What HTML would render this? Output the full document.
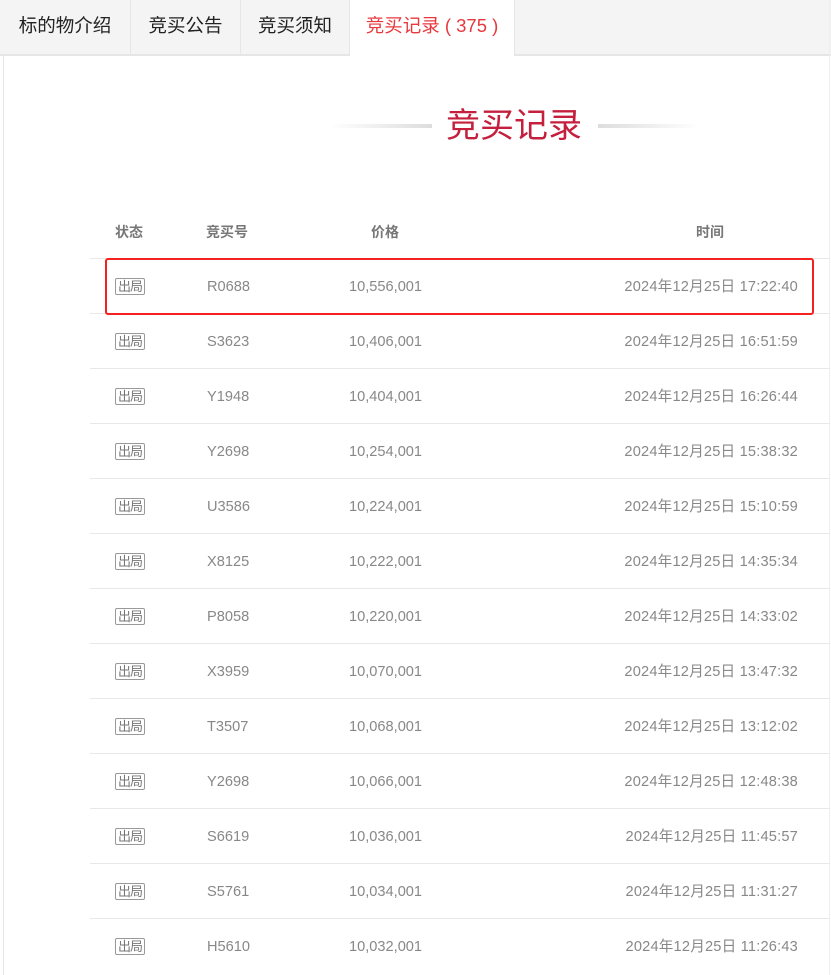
<!DOCTYPE html>
<html><head><meta charset="utf-8"><style>
*{margin:0;padding:0;box-sizing:border-box}
body{width:831px;height:975px;overflow:hidden;background:#fff;font-family:"Liberation Sans","Noto Sans CJK SC",sans-serif;position:relative}
.tabs{position:absolute;left:0;top:0;width:831px;height:56px;background:#f4f4f4;border-bottom:2px solid #e6e6e6}
.tab{position:absolute;top:0;height:54px;line-height:52px;font-size:18.5px;color:#222;text-align:center;border-right:1px solid #e6e6e6}
.tab.on{background:#fff;color:#e8383d;height:56px}
.lb{position:absolute;left:3px;top:56px;width:1px;height:919px;background:#e6e6e6}
.rb{position:absolute;left:829px;top:0;width:1px;height:975px;background:#eee}
.title{position:absolute;left:446px;top:104px;font-size:34px;line-height:44px;color:#c41f3c}
.ln{position:absolute;top:124px;height:4px;width:102px}
.row{position:absolute;left:90px;width:740px;height:55px;border-top:1px solid #e8e8e8;font-size:14.6px;color:#888}
.row span{position:absolute;top:1px;line-height:54px}
.row span.d{letter-spacing:0.2px}
.st{left:25px;top:19px!important;line-height:15px!important;font-size:13px;border:1px solid #999;border-radius:2px;padding:0 1px;color:#777;height:17px;width:30px;text-align:center;letter-spacing:-1px}
.hd{position:absolute;top:222px;font-size:14px;color:#777;font-weight:bold}
.box{position:absolute;left:105px;top:258px;width:709px;height:57px;border:2px solid #f52020;border-radius:3px}
</style></head><body>
<div class="tabs">
<div class="tab" style="left:0;width:131px">标的物介绍</div>
<div class="tab" style="left:131px;width:110px">竞买公告</div>
<div class="tab" style="left:241px;width:109px">竞买须知</div>
<div class="tab on" style="left:350px;width:165px">竞买记录 ( 375 )</div>
</div>
<div class="lb"></div><div class="rb"></div>
<div class="ln" style="left:330px;background:linear-gradient(90deg,#fff,#ddd)"></div>
<div class="title">竞买记录</div>
<div class="ln" style="left:598px;background:linear-gradient(90deg,#ddd,#fff)"></div>
<div class="hd" style="left:115px">状态</div>
<div class="hd" style="left:206px">竞买号</div>
<div class="hd" style="left:371px">价格</div>
<div class="hd" style="left:696px">时间</div>
<div class="row" style="top:258px"><span class="st">出局</span><span style="left:117px">R0688</span><span style="left:259px">10,556,001</span><span class="d" style="right:32px">2024年12月25日 17:22:40</span></div>
<div class="row" style="top:313px"><span class="st">出局</span><span style="left:117px">S3623</span><span style="left:259px">10,406,001</span><span class="d" style="right:32px">2024年12月25日 16:51:59</span></div>
<div class="row" style="top:368px"><span class="st">出局</span><span style="left:117px">Y1948</span><span style="left:259px">10,404,001</span><span class="d" style="right:32px">2024年12月25日 16:26:44</span></div>
<div class="row" style="top:423px"><span class="st">出局</span><span style="left:117px">Y2698</span><span style="left:259px">10,254,001</span><span class="d" style="right:32px">2024年12月25日 15:38:32</span></div>
<div class="row" style="top:478px"><span class="st">出局</span><span style="left:117px">U3586</span><span style="left:259px">10,224,001</span><span class="d" style="right:32px">2024年12月25日 15:10:59</span></div>
<div class="row" style="top:533px"><span class="st">出局</span><span style="left:117px">X8125</span><span style="left:259px">10,222,001</span><span class="d" style="right:32px">2024年12月25日 14:35:34</span></div>
<div class="row" style="top:588px"><span class="st">出局</span><span style="left:117px">P8058</span><span style="left:259px">10,220,001</span><span class="d" style="right:32px">2024年12月25日 14:33:02</span></div>
<div class="row" style="top:643px"><span class="st">出局</span><span style="left:117px">X3959</span><span style="left:259px">10,070,001</span><span class="d" style="right:32px">2024年12月25日 13:47:32</span></div>
<div class="row" style="top:698px"><span class="st">出局</span><span style="left:117px">T3507</span><span style="left:259px">10,068,001</span><span class="d" style="right:32px">2024年12月25日 13:12:02</span></div>
<div class="row" style="top:753px"><span class="st">出局</span><span style="left:117px">Y2698</span><span style="left:259px">10,066,001</span><span class="d" style="right:32px">2024年12月25日 12:48:38</span></div>
<div class="row" style="top:808px"><span class="st">出局</span><span style="left:117px">S6619</span><span style="left:259px">10,036,001</span><span class="d" style="right:32px">2024年12月25日 11:45:57</span></div>
<div class="row" style="top:863px"><span class="st">出局</span><span style="left:117px">S5761</span><span style="left:259px">10,034,001</span><span class="d" style="right:32px">2024年12月25日 11:31:27</span></div>
<div class="row" style="top:918px"><span class="st">出局</span><span style="left:117px">H5610</span><span style="left:259px">10,032,001</span><span class="d" style="right:32px">2024年12月25日 11:26:43</span></div>
<div class="box"></div>
</body></html>
